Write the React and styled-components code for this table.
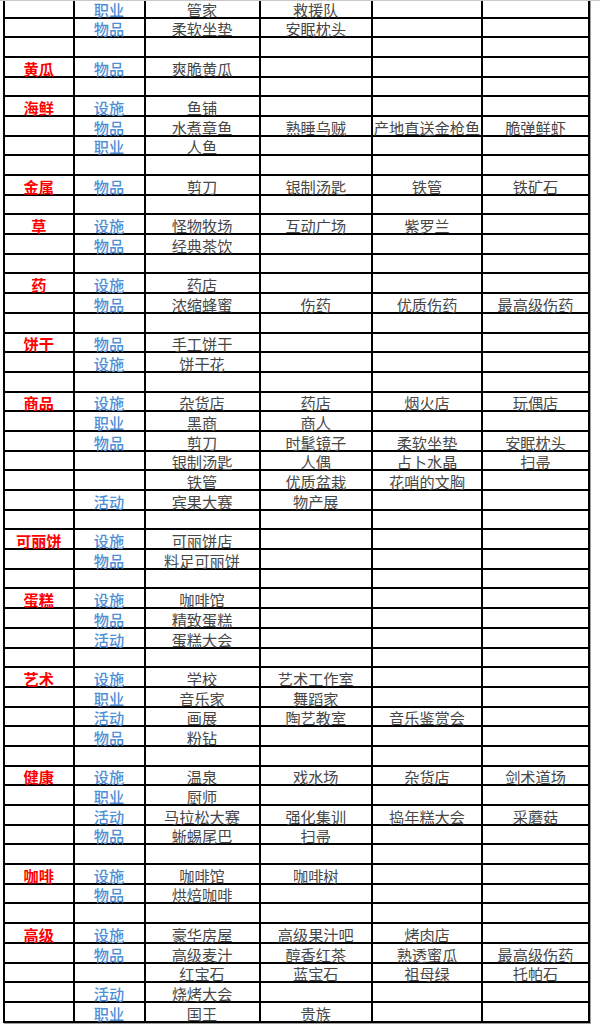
import React from "react";
import styled, { createGlobalStyle } from "styled-components";

const Global = createGlobalStyle`
  html, body { margin: 0; padding: 0; background: #ffffff; }
  #root { width: 600px; }
`;

const Page = styled.div`
  width: 600px;
  height: 1026px;
  border-top: 1px solid #c9c9c9;
  overflow: hidden;
  background: #ffffff;
`;

const Sheet = styled.div`
  display: grid;
  grid-template-columns: 67.5px 69px 113px 110.5px 108px 105px;
  grid-auto-rows: 17.7px;
  gap: 2px;
  padding: 2px;
  width: fit-content;
  margin: -4.2px 0 0 3px;
  background: #000000;
  box-shadow: 1px 1px 0 #a0a0a0;
`;

const colors = { cat: "#ff0000", type: "#4f8fd6", val: "#474747" };
const weights = { cat: 700, type: 500, val: 400 };

const Cell = styled.div`
  background: #ffffff;
  display: flex;
  align-items: flex-end;
  justify-content: center;
  white-space: nowrap;
  font-family: "Noto Sans CJK SC", "Noto Sans", sans-serif;
  font-size: 15.2px;
  line-height: 16px;
  color: ${(p) => colors[p.$kind]};
  font-weight: ${(p) => weights[p.$kind]};
`;

const rows = [
  ["", "职业", "管家", "救援队"],
  ["", "物品", "柔软坐垫", "安眠枕头"],
  [],
  ["黄瓜", "物品", "爽脆黄瓜"],
  [],
  ["海鲜", "设施", "鱼铺"],
  ["", "物品", "水煮章鱼", "熟睡乌贼", "产地直送金枪鱼", "脆弹鲜虾"],
  ["", "职业", "人鱼"],
  [],
  ["金属", "物品", "剪刀", "银制汤匙", "铁管", "铁矿石"],
  [],
  ["草", "设施", "怪物牧场", "互动广场", "紫罗兰"],
  ["", "物品", "经典茶饮"],
  [],
  ["药", "设施", "药店"],
  ["", "物品", "浓缩蜂蜜", "伤药", "优质伤药", "最高级伤药"],
  [],
  ["饼干", "物品", "手工饼干"],
  ["", "设施", "饼干花"],
  [],
  ["商品", "设施", "杂货店", "药店", "烟火店", "玩偶店"],
  ["", "职业", "黑商", "商人"],
  ["", "物品", "剪刀", "时髦镜子", "柔软坐垫", "安眠枕头"],
  ["", "", "银制汤匙", "人偶", "占卜水晶", "扫帚"],
  ["", "", "铁管", "优质盆栽", "花哨的文胸"],
  ["", "活动", "宾果大赛", "物产展"],
  [],
  ["可丽饼", "设施", "可丽饼店"],
  ["", "物品", "料足可丽饼"],
  [],
  ["蛋糕", "设施", "咖啡馆"],
  ["", "物品", "精致蛋糕"],
  ["", "活动", "蛋糕大会"],
  [],
  ["艺术", "设施", "学校", "艺术工作室"],
  ["", "职业", "音乐家", "舞蹈家"],
  ["", "活动", "画展", "陶艺教室", "音乐鉴赏会"],
  ["", "物品", "粉钻"],
  [],
  ["健康", "设施", "温泉", "戏水场", "杂货店", "剑术道场"],
  ["", "职业", "厨师"],
  ["", "活动", "马拉松大赛", "强化集训", "捣年糕大会", "采蘑菇"],
  ["", "物品", "蜥蜴尾巴", "扫帚"],
  [],
  ["咖啡", "设施", "咖啡馆", "咖啡树"],
  ["", "物品", "烘焙咖啡"],
  [],
  ["高级", "设施", "豪华房屋", "高级果汁吧", "烤肉店"],
  ["", "物品", "高级麦汁", "醇香红茶", "熟透蜜瓜", "最高级伤药"],
  ["", "", "红宝石", "蓝宝石", "祖母绿", "托帕石"],
  ["", "活动", "烧烤大会"],
  ["", "职业", "国王", "贵族"],
];

const kindFor = (i) => (i === 0 ? "cat" : i === 1 ? "type" : "val");

export default function App() {
  return (
    <>
      <Global />
      <Page>
        <Sheet>
          {rows.map((r, ri) =>
            [0, 1, 2, 3, 4, 5].map((ci) => (
              <Cell key={`${ri}-${ci}`} $kind={kindFor(ci)}>
                {r[ci] || ""}
              </Cell>
            ))
          )}
        </Sheet>
      </Page>
    </>
  );
}
